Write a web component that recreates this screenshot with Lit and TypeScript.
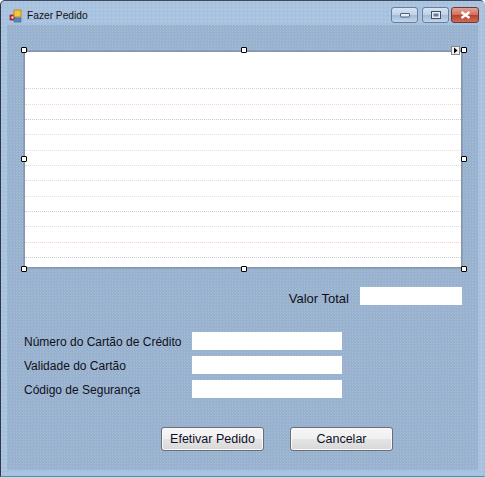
import { LitElement, html, css } from "lit";
import { customElement } from "lit/decorators.js";

const LINES = ["#d0d0ec","#f7d4ca","#c8c8c8","#cfe8ee","#f8d8d2","#cce6de","#e0d4ea","#f5e0c8","#d0d0d0","#cce0ee","#f7d0c6","#cacaca"];
const HANDLES = ["tl","tc","tr","ml","mr","bl","bc","br"];

@customElement("app-root")
export class AppRoot extends LitElement {
  static styles = css`
    :host { display: block; width: 485px; height: 477px; overflow: hidden; font-family: "Liberation Sans", Arial, sans-serif; color: #101018; }
    .window {
      box-sizing: border-box; width: 485px; height: 477px; display: flex; flex-direction: column;
      padding: 0 6px 6px 6px;
      border-left: 1px solid #2c3644; border-right: 1px solid #9fc4e0; border-top: 1px solid #3a4a5e; border-bottom: 1px solid #1fa8c8;
      border-radius: 5px 5px 0 0;
      background-color: #a8c2e0;
      background-image: conic-gradient(at 1px 1px, transparent 75%, #bcd2e6 0), conic-gradient(at 1px 1px, transparent 75%, #9cc0da 0);
      background-size: 4px 4px; background-position: 0 0, 2px 2px;
    }
    .titlebar { height: 24px; flex: none; display: flex; align-items: center; gap: 2px; margin-left: 2px; padding-top: 5px; box-sizing: border-box; }
    .title { font-size: 10.2px; color: #111; }
    .controls { margin-left: auto; display: flex; align-self: flex-start; margin-right: -1px; margin-top: 1px; }
    .ctl { box-sizing: border-box; width: 27px; height: 16px; border: 1px solid #6b7f9c; border-radius: 3px; display: flex; align-items: center; justify-content: center; background: linear-gradient(180deg, #d6e3f2 0, #bfd2e8 48%, #a3bbd8 52%, #c2d6ea 100%); }
    .ctl.max { margin: 0 2px 0 4px; }
    .ctl.close { width: 28px; background: linear-gradient(180deg, #e0a396 0, #d0705f 48%, #bd3f2e 52%, #cc6a58 100%); border-color: #6e3a34; }
    .client {
      flex: 1; box-sizing: border-box; padding: 26px 16px 0 17px;
      background-color: #9bafd3;
      background-image:
        conic-gradient(at 1px 1px, transparent 75%, #9cc8c8 0),
        conic-gradient(at 1px 1px, transparent 75%, #98c0cc 0);
      background-size: 3px 3px; background-position: 0 0, 1px 2px;
      display: flex; flex-direction: column;
    }
    .grid { box-sizing: border-box; position: relative; flex: none; height: 217px; background: #fff; border: 1px solid #8a95a8; padding-top: 22px; box-shadow: 0 0 0 1px rgba(90, 100, 125, 0.25); }
    .row { box-sizing: border-box; height: 15.33px; border-bottom: 1px dotted; }
    .h { position: absolute; box-sizing: border-box; width: 6px; height: 6px; background: #fff; border: 1px solid #000; border-radius: 1px; }
    .tl { left: -4px; top: -5px; } .tc { left: 216px; top: -5px; } .tr { right: -6px; top: -5px; }
    .ml { left: -4px; top: 104px; } .mr { right: -6px; top: 104px; }
    .bl { left: -4px; bottom: -5px; } .bc { left: 216px; bottom: -5px; } .br { right: -6px; bottom: -5px; }
    .tag { position: absolute; right: 1px; top: -6px; width: 9px; height: 9px; box-sizing: border-box; background: #f2f2f2; border: 1px solid #888; display: flex; align-items: center; justify-content: center; }
    .total { display: flex; justify-content: flex-end; align-items: center; gap: 11px; margin-top: 19px; height: 18px; }
    .lab { font-size: 12px; line-height: 18px; white-space: nowrap; }
    .total .lab { font-size: 13px; position: relative; top: 3px; }
    .field { width: 102px; height: 18px; background: #fff; }
    .form { display: grid; grid-template-columns: 168px 150px; row-gap: 6px; margin-top: 27px; }
    .form .field { width: 150px; }
    .form .lab { position: relative; top: 1px; }
    .actions { display: flex; margin-top: 29px; margin-left: 137px; gap: 26px; }
    .btn { box-sizing: border-box; width: 103px; height: 24px; border: 1px solid #6c6c78; border-radius: 3px; font: 12.5px "Liberation Sans", sans-serif; color: #101028; padding: 0; background: linear-gradient(180deg, #f6f6f6 0, #f0f0f0 48%, #e4e4e4 52%, #d8d8d8 100%); box-shadow: inset 0 0 0 1px #fafafa; }
  `;

  render() {
    return html`
      <div class="window">
        <div class="titlebar">
          <svg width="16" height="16" viewBox="0 0 16 16">
            <rect x="1" y="7" width="5" height="5" fill="#c8202a" stroke="#8a1a1a" stroke-width="0.6"/>
            <rect x="2.5" y="8.5" width="2" height="2" fill="#fff"/>
            <rect x="5" y="2" width="7" height="7" fill="#f3c53c" stroke="#b98a1a"/>
            <rect x="5" y="10" width="7" height="4" fill="#5a86c8" stroke="#38608f" stroke-width="0.6"/>
          </svg>
          <span class="title">Fazer Pedido</span>
          <div class="controls">
            <div class="ctl"><svg width="10" height="5" viewBox="0 0 10 5"><rect x="0.5" y="0.5" width="9" height="3.5" rx="0.5" fill="#e8eef6" stroke="#50607a"/></svg></div>
            <div class="ctl max"><svg width="10" height="8" viewBox="0 0 10 8"><rect x="0.5" y="0.5" width="9" height="7" fill="#e8eef6" stroke="#40506a"/><rect x="2.5" y="2.5" width="5" height="3" fill="#6a7a94"/></svg></div>
            <div class="ctl close"><svg width="11" height="8" viewBox="0 0 11 8"><path d="M1.5 1 L9.5 7 M9.5 1 L1.5 7" stroke="#fff" stroke-width="2.4"/></svg></div>
          </div>
        </div>
        <div class="client">
          <div class="grid">
            ${LINES.map((c) => html`<div class="row" style="border-color:${c}"></div>`)}
            ${HANDLES.map((h) => html`<div class="h ${h}"></div>`)}
            <div class="tag"><svg width="5" height="7" viewBox="0 0 5 7"><path d="M1 0.5 L4.5 3.5 L1 6.5Z" fill="#000"/></svg></div>
          </div>
          <div class="total"><span class="lab">Valor Total</span><div class="field"></div></div>
          <div class="form">
            <span class="lab">Número do Cartão de Crédito</span><div class="field"></div>
            <span class="lab">Validade do Cartão</span><div class="field"></div>
            <span class="lab">Código de Segurança</span><div class="field"></div>
          </div>
          <div class="actions">
            <button class="btn">Efetivar Pedido</button>
            <button class="btn">Cancelar</button>
          </div>
        </div>
      </div>
    `;
  }
}
